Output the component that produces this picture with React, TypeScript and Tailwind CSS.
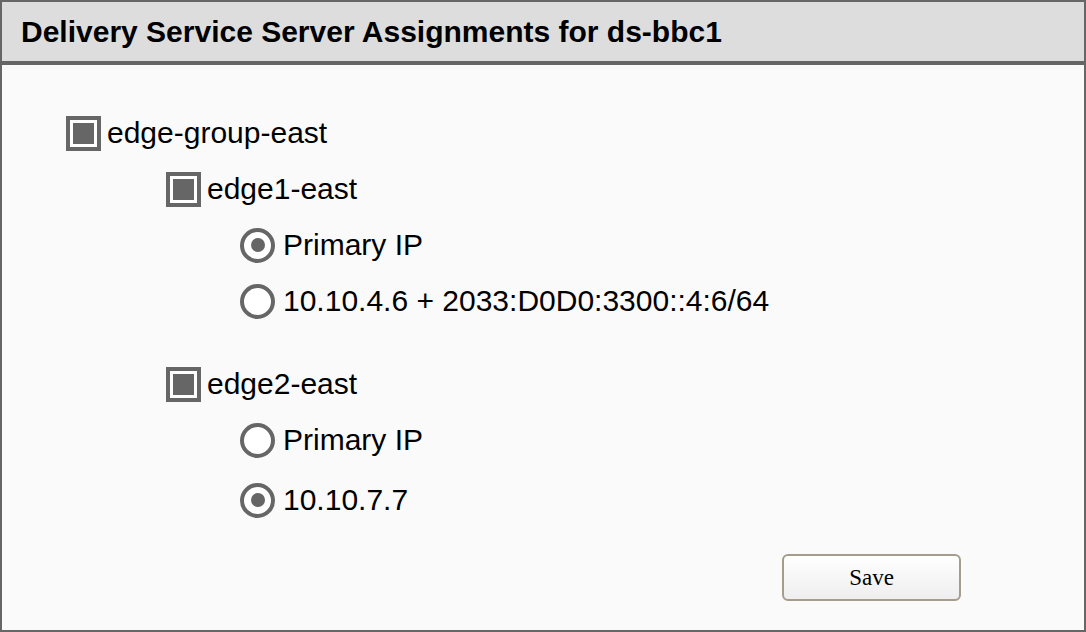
import React from 'react'

type CheckProps = { label: string }

const Check = ({ label }: CheckProps) => (
    <div className="flex items-center h-[56px] gap-[6px]">
        <span className="w-[35px] h-[35px] border-[4px] border-[#666666] bg-white p-[3px] flex">
            <span className="flex-1 bg-[#666666]" />
        </span>
        <span>{label}</span>
    </div>
)

type RadioProps = { label: string; checked?: boolean }

const Radio = ({ label, checked }: RadioProps) => (
    <div className="flex items-center h-[56px] gap-[8px]">
        <span className="w-[35px] h-[35px] rounded-full border-[4px] border-[#666666] bg-white flex items-center justify-center">
            {checked && <span className="w-[14px] h-[14px] rounded-full bg-[#666666]" />}
        </span>
        <span>{label}</span>
    </div>
)

export default function App() {
    return (
        <div className="w-[1086px] h-[632px] border-2 border-[#666666] bg-[#fafafa] flex flex-col font-['Liberation_Sans',Arial,sans-serif] text-black">
            <div className="h-[63px] shrink-0 bg-[#dddddd] border-b-4 border-[#666666] flex items-center pl-[19px]">
                <h1 className="text-[30px] font-bold leading-none">Delivery Service Server Assignments for ds-bbc1</h1>
            </div>

            <div className="flex-1 flex flex-col pl-[64px] pt-[40px] text-[30px] leading-none">
                <Check label="edge-group-east" />
                <div className="pl-[100px] flex flex-col">
                    <Check label="edge1-east" />
                    <div className="pl-[74px] flex flex-col">
                        <Radio label="Primary IP" checked />
                        <Radio label="10.10.4.6 + 2033:D0D0:3300::4:6/64" />
                    </div>

                    <div className="mt-[27px]">
                        <Check label="edge2-east" />
                    </div>
                    <div className="pl-[74px] flex flex-col">
                        <Radio label="Primary IP" />
                        <div className="mt-[4px]">
                            <Radio label="10.10.7.7" checked />
                        </div>
                    </div>
                </div>

                <div className="flex justify-end pr-[123px] mt-[26px]">
                    <button className="w-[179px] h-[47px] rounded-[6px] border-2 border-[#a59c8c] bg-gradient-to-b from-white to-[#eeeeee] font-['Liberation_Serif',serif] text-[23px] text-black">
                        Save
                    </button>
                </div>
            </div>
        </div>
    )
}
